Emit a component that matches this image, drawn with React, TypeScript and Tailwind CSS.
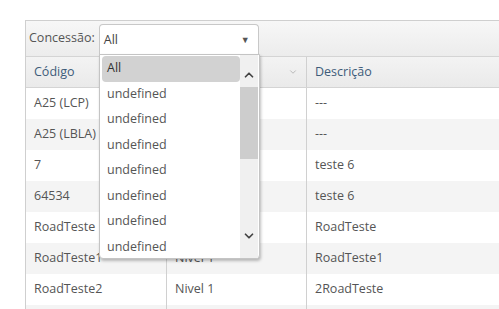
import { ChevronDown, ChevronUp } from "lucide-react";

const rows = [
  ["A25 (LCP)", "", "---"],
  ["A25 (LBLA)", "", "---"],
  ["7", "", "teste 6"],
  ["64534", "", "teste 6"],
  ["RoadTeste", "", "RoadTeste"],
  ["RoadTeste1", "Nivel 1", "RoadTeste1"],
  ["RoadTeste2", "Nivel 1", "2RoadTeste"],
  ["", "", ""],
];

const options = ["All", "undefined", "undefined", "undefined", "undefined", "undefined", "undefined", "undefined"];

export default function App() {
  return (
    <div className="h-[309px] w-[499px] overflow-hidden bg-white pt-[20px] pl-[25px] font-['Open_Sans',sans-serif] text-[12.5px] text-[#555]">
      <div className="relative border-l border-t border-[#cfcfcf]">
        {/* toolbar */}
        <div className="flex h-[35px] items-center bg-gradient-to-b from-[#f7f7f7] to-[#ececec] pl-[3px]">
          <span className="text-[#555]">Concessão:</span>
          <div className="ml-[4px] mt-[3px] flex h-[31px] w-[160px] items-center justify-between self-start rounded-t-[4px] border border-b-0 border-[#c8c8c8] bg-white pl-[4px] pr-[8px]">
            <span className="text-[#444]">All</span>
            <span className="text-[9px] text-[#555]">▼</span>
          </div>
        </div>

        {/* header */}
        <div className="flex h-[32px] border-t border-b border-[#d4d4d4] bg-gradient-to-b from-[#f3f3f3] to-[#eaeaea] text-[#3e5c7a]">
          <div className="flex w-[141px] items-center border-r border-[#d0d0d0] pl-[8px]">Código</div>
          <div className="flex w-[140px] items-center justify-end border-r border-[#d0d0d0] pr-[8px]">
            <ChevronDown className="h-[10px] w-[10px] text-[#999]" strokeWidth={1.5} />
          </div>
          <div className="flex flex-1 items-center pl-[8px]">Descrição</div>
        </div>

        {/* rows */}
        {rows.map((r, i) => (
          <div key={i} className={`flex h-[31px] ${i % 2 === 1 ? "bg-[#f4f4f4]" : "bg-white"}`}>
            <div className="flex w-[141px] items-center border-r border-[#d0d0d0] pl-[8px]">{r[0]}</div>
            <div className="flex w-[140px] items-center border-r border-[#d0d0d0] pl-[8px]">{r[1]}</div>
            <div className="flex flex-1 items-center pl-[8px]">{r[2]}</div>
          </div>
        ))}

        {/* dropdown list */}
        <div className="absolute left-[73px] top-[33px] flex h-[205px] w-[161px] rounded-b-[4px] border border-[#c4c4c4] bg-white shadow-[1px_2px_3px_rgba(0,0,0,0.25)]">
          <div className="flex-1 pl-[2px] pt-[1px]">
            {options.map((o, i) => (
              <div
                key={i}
                className={`flex h-[25.5px] items-center rounded-[4px] pl-[5px] ${i === 0 ? "bg-[#d2d2d2] text-[#333]" : "text-[#555]"}`}
              >
                {o}
              </div>
            ))}
          </div>
          <div className="mr-[1px] flex w-[18px] flex-col items-center bg-[#f0f0f0] pb-[15px] pt-[13px]">
            <ChevronUp className="h-[14px] w-[14px] text-[#444]" strokeWidth={3} />
            <div className="mt-[5px] h-[72px] w-full bg-[#cdcdcd]" />
            <div className="flex-1" />
            <ChevronDown className="h-[14px] w-[14px] text-[#444]" strokeWidth={3} />
          </div>
        </div>
      </div>
    </div>
  );
}
